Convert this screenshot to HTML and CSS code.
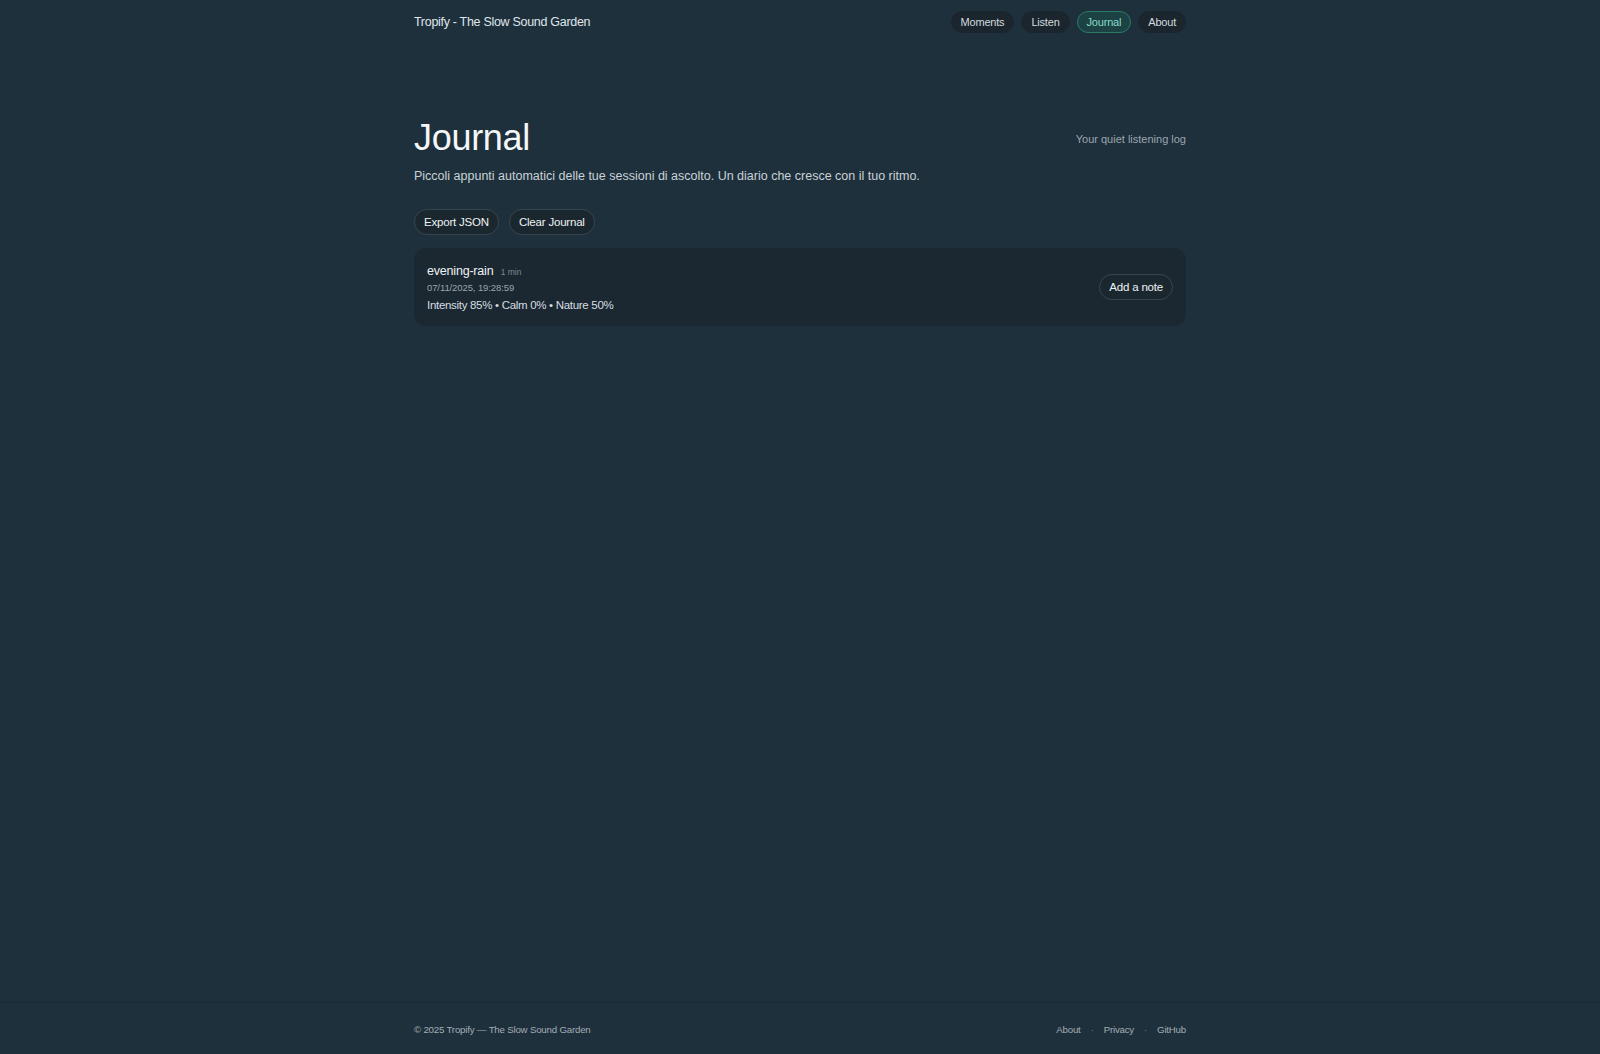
FILE: index.html
```html
<!DOCTYPE html>
<html lang="en">
<head>
    <meta charset="UTF-8">
    <meta name="viewport" content="width=device-width, initial-scale=1.0">
    <title>Journal - Tropify</title>
    <link rel="stylesheet" href="styles.css">
</head>
<body>
    <div class="page">
        <header class="topbar">
            <div class="brand">Tropify - The Slow Sound Garden</div>
            <nav class="nav">
                <a href="#" class="pill">Moments</a>
                <a href="#" class="pill">Listen</a>
                <a href="#" class="pill active">Journal</a>
                <a href="#" class="pill">About</a>
            </nav>
        </header>

        <main class="content">
            <div class="title-row">
                <h1>Journal</h1>
                <span class="tagline">Your quiet listening log</span>
            </div>
            <p class="lead">Piccoli appunti automatici delle tue sessioni di ascolto. Un diario che cresce con il tuo ritmo.</p>

            <div class="actions">
                <button class="btn">Export JSON</button>
                <button class="btn">Clear Journal</button>
            </div>

            <div class="entries">
                <div class="entry">
                    <div class="entry-info">
                        <div class="entry-title">evening-rain <span class="duration">1 min</span></div>
                        <div class="entry-date">07/11/2025, 19:28:59</div>
                        <div class="entry-stats">Intensity 85% • Calm 0% • Nature 50%</div>
                    </div>
                    <button class="btn">Add a note</button>
                </div>
            </div>
        </main>

        <footer class="footer">
            <div class="footer-inner">
                <span>© 2025 Tropify — The Slow Sound Garden</span>
                <div class="footer-links">
                    <a href="#">About</a>
                    <span class="dot">·</span>
                    <a href="#">Privacy</a>
                    <span class="dot">·</span>
                    <a href="#">GitHub</a>
                </div>
            </div>
        </footer>
    </div>
</body>
</html>
```

FILE: styles.css
```css
* {
    margin: 0;
    padding: 0;
    box-sizing: border-box;
}

body {
    font-family: "Liberation Sans", Arial, sans-serif;
    background: #1f303d;
    color: #e6ecef;
    min-height: 100vh;
}

a {
    text-decoration: none;
    color: inherit;
}

.page {
    min-height: 100vh;
    display: flex;
    flex-direction: column;
}

.topbar {
    width: 772px;
    margin: 0 auto;
    height: 44px;
    display: flex;
    justify-content: space-between;
    align-items: center;
}

.brand {
    font-size: 12.5px;
    letter-spacing: -0.3px;
    color: #dfe6ea;
}

.nav {
    display: flex;
    gap: 7px;
}

.pill {
    font-size: 11px;
    letter-spacing: -0.2px;
    color: #d3dade;
    background: #1a252d;
    border: 1px solid #1a252d;
    border-radius: 999px;
    padding: 0 9px;
    height: 22px;
    display: flex;
    align-items: center;
}

.pill.active {
    background: #1d4244;
    border-color: #2b7a68;
    color: #86dcc4;
}

.content {
    width: 772px;
    margin: 0 auto;
    flex: 1;
    padding-top: 72px;
}

.title-row {
    display: flex;
    justify-content: space-between;
    align-items: center;
}

h1 {
    font-size: 36px;
    font-weight: 400;
    letter-spacing: -0.3px;
    color: #f4f7f8;
    line-height: 44px;
}

.tagline {
    font-size: 11px;
    color: #9aa6ad;
    margin-top: 2px;
}

.lead {
    font-size: 12.5px;
    line-height: 18px;
    color: #c9d2d7;
    margin-top: 7px;
}

.actions {
    display: flex;
    gap: 10px;
    margin-top: 24px;
}

.btn {
    font-family: inherit;
    font-size: 11.5px;
    letter-spacing: -0.2px;
    color: #eef2f4;
    background: #1b272f;
    border: 1px solid #354550;
    border-radius: 999px;
    height: 26px;
    padding: 0 9px;
    cursor: pointer;
}

.entries {
    margin-top: 13px;
}

.entry {
    background: #1b2831;
    border-radius: 12px;
    padding: 0 13px;
    height: 78px;
    display: flex;
    justify-content: space-between;
    align-items: center;
}

.entry-title {
    font-size: 12.5px;
    letter-spacing: -0.2px;
    line-height: 13px;
    padding-top: 4px;
    color: #eef2f4;
}

.duration {
    font-size: 8.5px;
    letter-spacing: 0;
    color: #7d8990;
    margin-left: 4px;
}

.entry-date {
    font-size: 9.5px;
    letter-spacing: -0.1px;
    line-height: 16px;
    color: #9aa5ac;
    margin-top: 1px;
}

.entry-stats {
    font-size: 11.5px;
    letter-spacing: -0.3px;
    line-height: 17px;
    color: #d6dde1;
    margin-top: 1px;
}

.footer {
    border-top: 1px solid #1b2a35;
    height: 52px;
}

.footer-inner {
    width: 772px;
    margin: 0 auto;
    height: 100%;
    display: flex;
    justify-content: space-between;
    align-items: center;
    font-size: 9.7px;
    letter-spacing: -0.2px;
    color: #a3adb3;
    padding-top: 2px;
}

.footer-links {
    display: flex;
    gap: 10px;
}

.dot {
    color: #6c7880;
}
```
